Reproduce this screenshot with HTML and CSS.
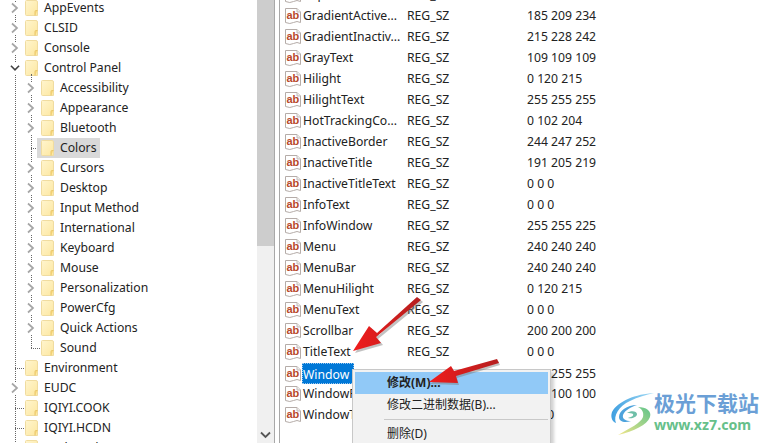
FILE: index.html
```html
<!DOCTYPE html>
<html lang="zh">
<head>
<meta charset="utf-8">
<title>Registry Editor</title>
<link rel="stylesheet" href="styles.css">
</head>
<body>
<svg class="sprite" aria-hidden="true">
  <defs>
    <linearGradient id="fold" x1="0" y1="0" x2="1" y2="1">
      <stop offset="0" stop-color="#fff5cf"/>
      <stop offset="1" stop-color="#fde79f"/>
    </linearGradient>
  </defs>
  <symbol id="folder" viewBox="0 0 13 16">
    <path d="M.5 1.500Q.5.500 1.500.500H11Q12.500.500 12.500 2V15.500H1.500Q.5 15.500.5 14.500Z" fill="url(#fold)" stroke="#f0dca0"/>
    <path d="M10 15.500V11.500Q10 10.500 11 10.500H12.500" fill="#f8d97f" stroke="#e9c76e"/>
  </symbol>
  <symbol id="closed" viewBox="0 0 9 11">
    <path d="M2 1l5 4.500L2 10" fill="none" stroke="#a6a6a6" stroke-width="1.700"/>
  </symbol>
  <symbol id="open" viewBox="0 0 11 9">
    <path d="M1 2l4.500 4.500L10 2" fill="none" stroke="#404040" stroke-width="1.700"/>
  </symbol>
  <symbol id="ab" viewBox="0 0 16 17">
    <path d="M.5.500H12L15.500 4V14.500Q12 12.500 8.500 14.500T.5 14.500Z" fill="#fff" stroke="#b5aca8"/>
    <path d="M12 .5V4H15.500" fill="#eee" stroke="#c2bab6"/>
    <text x="1.500" y="10.500" class="ab-text">ab</text>
  </symbol>
</svg>

<main class="window">
  <section class="tree-pane">
    <ul class="tree">
      <li class="node"><svg class="twisty"><use href="#closed"/></svg><svg class="folder"><use href="#folder"/></svg><span>AppEvents</span></li>
      <li class="node"><svg class="twisty"><use href="#closed"/></svg><svg class="folder"><use href="#folder"/></svg><span>CLSID</span></li>
      <li class="node"><svg class="twisty"><use href="#closed"/></svg><svg class="folder"><use href="#folder"/></svg><span>Console</span></li>
      <li class="node"><svg class="twisty twisty-open"><use href="#open"/></svg><svg class="folder"><use href="#folder"/></svg><span>Control Panel</span></li>
      <li>
        <ul class="subtree">
          <li class="node"><svg class="twisty"><use href="#closed"/></svg><svg class="folder"><use href="#folder"/></svg><span>Accessibility</span></li>
          <li class="node"><svg class="twisty"><use href="#closed"/></svg><svg class="folder"><use href="#folder"/></svg><span>Appearance</span></li>
          <li class="node"><svg class="twisty"><use href="#closed"/></svg><svg class="folder"><use href="#folder"/></svg><span>Bluetooth</span></li>
          <li class="node"><i class="leaf"></i><span class="selected"><svg class="folder"><use href="#folder"/></svg><span>Colors</span></span></li>
          <li class="node"><svg class="twisty"><use href="#closed"/></svg><svg class="folder"><use href="#folder"/></svg><span>Cursors</span></li>
          <li class="node"><svg class="twisty"><use href="#closed"/></svg><svg class="folder"><use href="#folder"/></svg><span>Desktop</span></li>
          <li class="node"><svg class="twisty"><use href="#closed"/></svg><svg class="folder"><use href="#folder"/></svg><span>Input Method</span></li>
          <li class="node"><svg class="twisty"><use href="#closed"/></svg><svg class="folder"><use href="#folder"/></svg><span>International</span></li>
          <li class="node"><svg class="twisty"><use href="#closed"/></svg><svg class="folder"><use href="#folder"/></svg><span>Keyboard</span></li>
          <li class="node"><svg class="twisty"><use href="#closed"/></svg><svg class="folder"><use href="#folder"/></svg><span>Mouse</span></li>
          <li class="node"><svg class="twisty"><use href="#closed"/></svg><svg class="folder"><use href="#folder"/></svg><span>Personalization</span></li>
          <li class="node"><svg class="twisty"><use href="#closed"/></svg><svg class="folder"><use href="#folder"/></svg><span>PowerCfg</span></li>
          <li class="node"><svg class="twisty"><use href="#closed"/></svg><svg class="folder"><use href="#folder"/></svg><span>Quick Actions</span></li>
          <li class="node"><i class="leaf"></i><svg class="folder"><use href="#folder"/></svg><span>Sound</span></li>
        </ul>
      </li>
      <li class="node"><i class="leaf"></i><svg class="folder"><use href="#folder"/></svg><span>Environment</span></li>
      <li class="node"><svg class="twisty"><use href="#closed"/></svg><svg class="folder"><use href="#folder"/></svg><span>EUDC</span></li>
      <li class="node"><i class="leaf"></i><svg class="folder"><use href="#folder"/></svg><span>IQIYI.COOK</span></li>
      <li class="node"><i class="leaf"></i><svg class="folder"><use href="#folder"/></svg><span>IQIYI.HCDN</span></li>
      <li class="node"><i class="leaf"></i><svg class="folder"><use href="#folder"/></svg><span>Keyboard Layout</span></li>
    </ul>
  </section>

  <div class="scrollbar">
    <div class="thumb"></div>
    <div class="track"><svg class="arrow" viewBox="0 0 11 8"><path d="M1 1.500l4.500 4.500L10 1.500" fill="none" stroke="#555" stroke-width="1.800"/></svg></div>
  </div>
  <div class="splitter"></div>

  <section class="values">
    <div class="row"><svg class="ab"><use href="#ab"/></svg><span>CaptionText</span><span>REG_SZ</span><span>0 0 0</span></div>
    <div class="row"><svg class="ab"><use href="#ab"/></svg><span>GradientActive...</span><span>REG_SZ</span><span>185 209 234</span></div>
    <div class="row"><svg class="ab"><use href="#ab"/></svg><span>GradientInactiv...</span><span>REG_SZ</span><span>215 228 242</span></div>
    <div class="row"><svg class="ab"><use href="#ab"/></svg><span>GrayText</span><span>REG_SZ</span><span>109 109 109</span></div>
    <div class="row"><svg class="ab"><use href="#ab"/></svg><span>Hilight</span><span>REG_SZ</span><span>0 120 215</span></div>
    <div class="row"><svg class="ab"><use href="#ab"/></svg><span>HilightText</span><span>REG_SZ</span><span>255 255 255</span></div>
    <div class="row"><svg class="ab"><use href="#ab"/></svg><span>HotTrackingCo...</span><span>REG_SZ</span><span>0 102 204</span></div>
    <div class="row"><svg class="ab"><use href="#ab"/></svg><span>InactiveBorder</span><span>REG_SZ</span><span>244 247 252</span></div>
    <div class="row"><svg class="ab"><use href="#ab"/></svg><span>InactiveTitle</span><span>REG_SZ</span><span>191 205 219</span></div>
    <div class="row"><svg class="ab"><use href="#ab"/></svg><span>InactiveTitleText</span><span>REG_SZ</span><span>0 0 0</span></div>
    <div class="row"><svg class="ab"><use href="#ab"/></svg><span>InfoText</span><span>REG_SZ</span><span>0 0 0</span></div>
    <div class="row"><svg class="ab"><use href="#ab"/></svg><span>InfoWindow</span><span>REG_SZ</span><span>255 255 225</span></div>
    <div class="row"><svg class="ab"><use href="#ab"/></svg><span>Menu</span><span>REG_SZ</span><span>240 240 240</span></div>
    <div class="row"><svg class="ab"><use href="#ab"/></svg><span>MenuBar</span><span>REG_SZ</span><span>240 240 240</span></div>
    <div class="row"><svg class="ab"><use href="#ab"/></svg><span>MenuHilight</span><span>REG_SZ</span><span>0 120 215</span></div>
    <div class="row"><svg class="ab"><use href="#ab"/></svg><span>MenuText</span><span>REG_SZ</span><span>0 0 0</span></div>
    <div class="row"><svg class="ab"><use href="#ab"/></svg><span>Scrollbar</span><span>REG_SZ</span><span>200 200 200</span></div>
    <div class="row"><svg class="ab"><use href="#ab"/></svg><span>TitleText</span><span>REG_SZ</span><span>0 0 0</span></div>
    <div class="row"><svg class="ab"><use href="#ab"/></svg><span class="name-selected">Window</span><span>REG_SZ</span><span>255 255 255</span></div>
    <div class="row"><svg class="ab"><use href="#ab"/></svg><span>WindowFrame</span><span>REG_SZ</span><span>100 100 100</span></div>
    <div class="row"><svg class="ab"><use href="#ab"/></svg><span>WindowText</span><span>REG_SZ</span><span>0 0 0</span></div>
  </section>

  <ul class="menu">
    <li class="menu-item menu-active">修改(M)...</li>
    <li class="menu-item">修改二进制数据(B)...</li>
    <li class="menu-sep"></li>
    <li class="menu-item">删除(D)</li>
  </ul>

  <svg class="arrows" viewBox="0 0 770 443">
    <defs>
      <linearGradient id="red" x1="0" y1="0" x2="1" y2="0">
        <stop offset="0" stop-color="#f01c1c"/>
        <stop offset="1" stop-color="#b51f1f"/>
      </linearGradient>
    </defs>
    <path d="M417 297L377 333L369 326L353 351L381 343L376 337L421 300Z" fill="#777" opacity=".45" transform="translate(2 2)"/>
    <path d="M417 297L377 333L369 326L353 351L381 343L376 337L421 300Z" fill="url(#red)"/>
    <path d="M497 359L454 371L451 366L429 382L458 383L456 376L499 363Z" fill="#777" opacity=".45" transform="translate(1 2)"/>
    <path d="M497 359L454 371L451 366L429 382L458 383L456 376L499 363Z" fill="url(#red)"/>
  </svg>

  <div class="watermark">
    <svg class="swirl" viewBox="0 0 46 44">
      <defs>
        <linearGradient id="sw1" x1="0" y1="0" x2="1" y2="0"><stop offset="0" stop-color="#3f9fe0"/><stop offset="1" stop-color="#a5dcf5"/></linearGradient>
        <linearGradient id="sw2" x1="0" y1="1" x2="1" y2="0"><stop offset="0" stop-color="#f3e68a"/><stop offset="1" stop-color="#5fc48a"/></linearGradient>
      </defs>
      <path d="M44 1C26 2 8 9 2 20C0 26 3 30 6 31C3 24 9 14 20 9C28 5 36 3 44 1Z" fill="url(#sw1)"/>
      <path d="M27 13C17 13 9 19 9 25C9 30 15 31 21 29C16 29 12 27 13 23C15 18 21 15 27 13Z" fill="#4da3dc"/>
      <path d="M28 15C36 15 42 19 40 25C37 33 24 39 8 43C20 36 31 31 33 25C34 20 32 17 28 15Z" fill="url(#sw2)"/>
      <path d="M17 21C21 18 27 19 27 22C27 25 22 27 18 26C21 25 24 24 23 22C22 21 19 21 17 21Z" fill="#6fbfa8"/>
    </svg>
    <div class="brand">
      <div class="brand-cn">极光下载站</div>
      <div class="brand-url">www.xz7.com</div>
    </div>
  </div>
</main>
</body>
</html>
```

FILE: styles.css
```css
* { box-sizing: border-box; }
html, body { margin: 0; padding: 0; background: #fff; }
body { width: 770px; height: 443px; overflow: hidden; }
ul { list-style: none; margin: 0; padding: 0; }

.sprite { width: 0; height: 0; position: absolute; }
.ab-text { font: 700 11px "Liberation Sans", sans-serif; fill: #b8482a; }

.window {
  position: relative;
  display: flex;
  width: 770px;
  height: 443px;
  overflow: hidden;
  font: 12.2px/1 "Noto Sans", "Noto Sans CJK SC", sans-serif;
  color: #222;
}

/* tree */
.tree-pane { width: 257px; flex: none; overflow: hidden; }
.tree { position: relative; margin-top: -2px; }
.tree::before {
  content: "";
  position: absolute;
  left: 15px;
  top: 0;
  bottom: 0;
  border-left: 1px dotted #666;
}
.subtree { position: relative; padding-left: 16px; }
.subtree::before {
  content: "";
  position: absolute;
  left: 31px;
  top: -4px;
  bottom: 10px;
  border-left: 1px dotted #666;
}
.node {
  position: relative;
  display: flex;
  align-items: center;
  height: 20px;
  padding-left: 9px;
  white-space: nowrap;
}
.twisty {
  flex: none;
  width: 11px;
  height: 12px;
  margin-right: 5px;
  padding: 0 1px;
  background: #fff;
  position: relative;
}
.twisty-open { width: 12px; margin-right: 4px; }
.leaf {
  flex: none;
  width: 9px;
  height: 0;
  margin-left: 6px;
  margin-right: 1px;
  border-top: 1px dotted #666;
}
.folder { flex: none; width: 13px; height: 16px; margin-right: 6px; position: relative; }
.selected {
  display: flex;
  align-items: center;
  height: 20px;
  margin-left: -4px;
  padding-left: 4px;
  padding-right: 4px;
  background: #d9d9d9;
  position: relative;
}

/* scrollbar */
.scrollbar { width: 17px; flex: none; display: flex; flex-direction: column; }
.thumb { height: 246px; background: #cdcdcd; }
.track {
  flex: 1;
  background: #f0f0f0;
  display: flex;
  align-items: flex-end;
  justify-content: center;
  padding-bottom: 4px;
}
.arrow { width: 11px; height: 8px; }
.splitter {
  width: 6px;
  flex: none;
  border-left: 1px solid #a8a8a8;
  border-right: 1px solid #a8a8a8;
}

/* value list */
.values { flex: 1; margin-top: -15px; padding-left: 5px; }
.row {
  display: grid;
  grid-template-columns: 18px 104px 120px 1fr;
  align-items: center;
  height: 21px;
  white-space: nowrap;
}
.ab { width: 16px; height: 17px; }
.name-selected {
  justify-self: start;
  margin: 0 0 2px -1px;
  padding: 2px 5px 0 1px;
  line-height: 19px;
  background: #0078d7;
  color: #fff;
  outline: 1px dotted #9cc8ee;
  outline-offset: -1px;
}

/* context menu */
.menu {
  position: absolute;
  left: 352px;
  top: 369px;
  width: 199px;
  height: 90px;
  padding: 2px;
  background: #f2f2f2;
  border: 1px solid #c8c8c8;
  box-shadow: 3px 3px 3px rgba(0, 0, 0, .18);
  font-size: 12px;
  color: #222;
}
.menu-item {
  height: 22px;
  line-height: 22px;
  padding-left: 32px;
  white-space: nowrap;
}
.menu-active { background: #91c9f7; font-weight: 700; }
.menu-sep { height: 1px; margin: 3px 0 3px 29px; background: #c9c9c9; }

.arrows { position: absolute; left: 0; top: 0; width: 770px; height: 443px; pointer-events: none; }

/* watermark */
.watermark {
  position: absolute;
  left: 610px;
  top: 392px;
  display: flex;
  background: rgba(255, 255, 255, .6);
}
.swirl { width: 46px; height: 44px; flex: none; }
.brand { margin: -2px 0 0 -2px; }
.brand-cn {
  font: 700 21px/24px "Noto Sans CJK SC", sans-serif;
  color: #6b9fd6;
  white-space: nowrap;
}
.brand-url {
  margin-top: 1px;
  font: 700 14.2px/20px "Noto Sans", sans-serif;
  color: #66c08a;
  white-space: nowrap;
}
```
